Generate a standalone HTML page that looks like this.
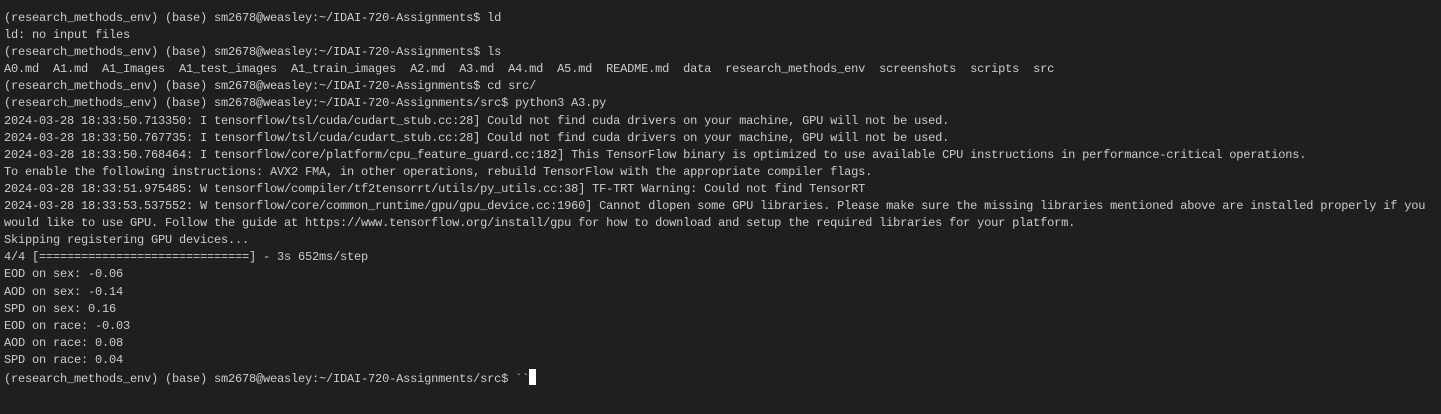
<html><head><style>
body{margin:0;background:#1f1f1f;width:1441px;height:414px;overflow:hidden}
pre{margin:0;position:absolute;left:4px;top:10px;font-family:"Liberation Mono",monospace;font-size:12px;letter-spacing:-0.2px;line-height:17.1px;color:#cccccc}
.c{display:inline-block;width:7px;height:16px;background:#fff;vertical-align:-3px}
</style></head><body><pre>(research_methods_env) (base) sm2678@weasley:~/IDAI-720-Assignments$ ld
ld: no input files
(research_methods_env) (base) sm2678@weasley:~/IDAI-720-Assignments$ ls
A0.md  A1.md  A1_Images  A1_test_images  A1_train_images  A2.md  A3.md  A4.md  A5.md  README.md  data  research_methods_env  screenshots  scripts  src
(research_methods_env) (base) sm2678@weasley:~/IDAI-720-Assignments$ cd src/
(research_methods_env) (base) sm2678@weasley:~/IDAI-720-Assignments/src$ python3 A3.py
2024-03-28 18:33:50.713350: I tensorflow/tsl/cuda/cudart_stub.cc:28] Could not find cuda drivers on your machine, GPU will not be used.
2024-03-28 18:33:50.767735: I tensorflow/tsl/cuda/cudart_stub.cc:28] Could not find cuda drivers on your machine, GPU will not be used.
2024-03-28 18:33:50.768464: I tensorflow/core/platform/cpu_feature_guard.cc:182] This TensorFlow binary is optimized to use available CPU instructions in performance-critical operations.
To enable the following instructions: AVX2 FMA, in other operations, rebuild TensorFlow with the appropriate compiler flags.
2024-03-28 18:33:51.975485: W tensorflow/compiler/tf2tensorrt/utils/py_utils.cc:38] TF-TRT Warning: Could not find TensorRT
2024-03-28 18:33:53.537552: W tensorflow/core/common_runtime/gpu/gpu_device.cc:1960] Cannot dlopen some GPU libraries. Please make sure the missing libraries mentioned above are installed properly if you
would like to use GPU. Follow the guide at https://www.tensorflow.org/install/gpu for how to download and setup the required libraries for your platform.
Skipping registering GPU devices...
4/4 [==============================] - 3s 652ms/step
EOD on sex: -0.06
AOD on sex: -0.14
SPD on sex: 0.16
EOD on race: -0.03
AOD on race: 0.08
SPD on race: 0.04
(research_methods_env) (base) sm2678@weasley:~/IDAI-720-Assignments/src$ ``<span class="c"></span></pre></body></html>
